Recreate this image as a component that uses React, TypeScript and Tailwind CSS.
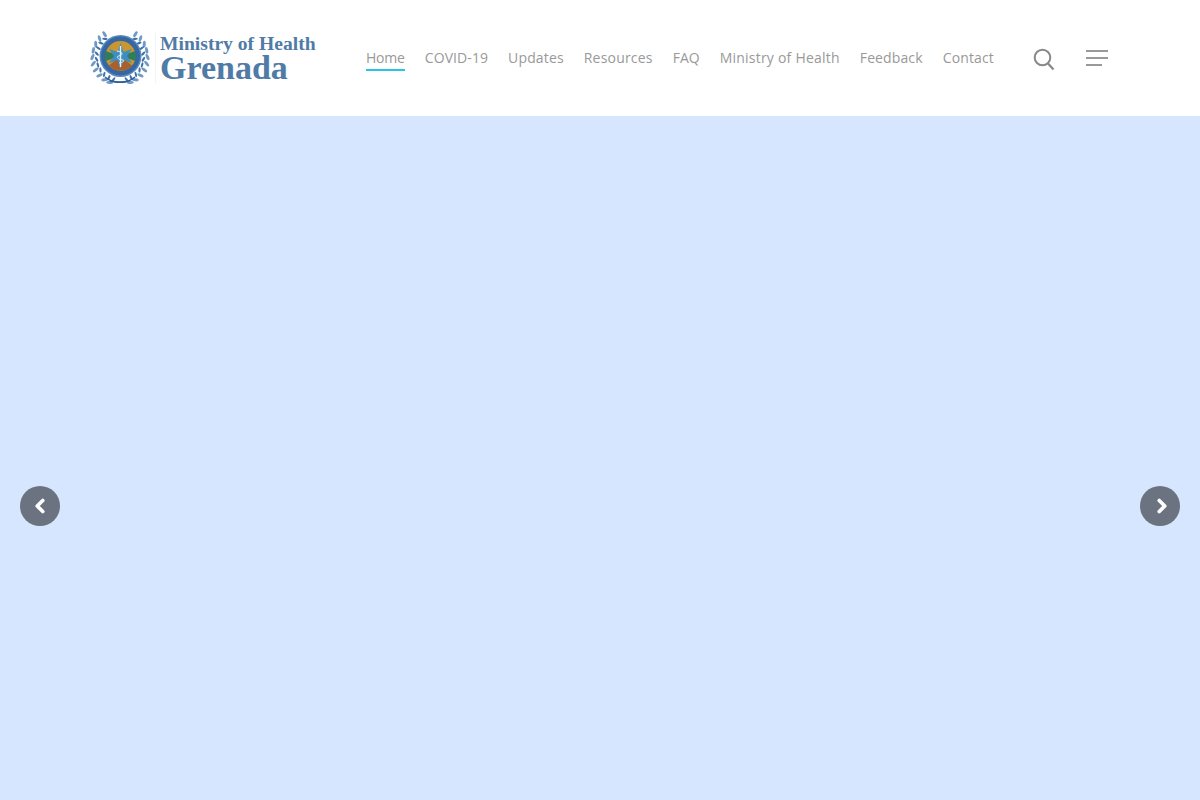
import { ChevronLeft, ChevronRight } from "lucide-react";

const navItems = [
  { label: "Home", spacing: "tracking-[-0.2px]" },
  { label: "COVID-19", spacing: "tracking-[0.08px]" },
  { label: "Updates", spacing: "tracking-[0.15px]" },
  { label: "Resources", spacing: "tracking-[0.2px]" },
  { label: "FAQ", spacing: "tracking-normal" },
  { label: "Ministry of Health", spacing: "tracking-[0.22px]" },
  { label: "Feedback", spacing: "tracking-[0.12px]" },
  { label: "Contact", spacing: "tracking-[0.15px]" },
];

// angle runs from the top of the wreath down to the stems
const angles = [-56, -42, -28, -14, 0, 14, 28, 42, 56, 68];

function Wreath({ flip }: { flip?: boolean }) {
  return (
    <g transform={flip ? "translate(60 0) scale(-1 1)" : undefined}>
      {angles.map((a) => {
        const rad = (a * Math.PI) / 180;
        const x = 30 - 27.5 * Math.cos(rad);
        const y = 26 + 27.5 * Math.sin(rad);
        const x2 = 30 - 23.5 * Math.cos(rad + 0.1);
        const y2 = 26 + 23.5 * Math.sin(rad + 0.1);
        return (
          <g key={a}>
            <ellipse cx={x} cy={y} rx="1.5" ry="3.4" fill="#6f9ac6" transform={`rotate(${a + 25} ${x} ${y})`} />
            <ellipse cx={x2} cy={y2} rx="1.1" ry="2.8" fill="#3f70a8" transform={`rotate(${a - 30} ${x2} ${y2})`} />
          </g>
        );
      })}
      <path d="M15 46 C22 52 29 52 40 50" stroke="#2f5f96" strokeWidth="1.5" fill="none" />
    </g>
  );
}

function Logo() {
  return (
    <div className="flex items-center w-[226px] h-[56px]">
      <svg width="60" height="54" viewBox="0 0 60 54" className="shrink-0">
        <Wreath />
        <Wreath flip />
        <circle cx="30.5" cy="25" r="21" fill="#5a8abf" />
        <circle cx="30.5" cy="25" r="19.5" fill="#3567a2" />
        <circle cx="30.5" cy="25" r="15" fill="#c9962f" />
        <path d="M30.5 25 L15.5 20 A15 15 0 0 0 15.5 30 Z M30.5 25 L45.5 20 A15 15 0 0 1 45.5 30 Z" fill="#2f7d5c" />
        <path d="M30.5 25 L19 34.5 A15 15 0 0 0 42 34.5 Z" fill="#a9602f" />
        <path d="M30.5 12 L33.5 21 L42 18 L37 25 L42 32 L33.5 29 L30.5 38 L27.5 29 L19 32 L24 25 L19 18 L27.5 21 Z" fill="#3c8fc4" />
        <path d="M30.5 15 V36" stroke="#e8f0f6" strokeWidth="1.4" />
        <path d="M27 20 C33.5 21 33.5 24 28.5 25 C25.5 26 28.5 29 33.5 29 C34.5 31 30.5 32 29 32" stroke="#e8f0f6" strokeWidth="1" fill="none" />
      </svg>
      <div className="ml-[5px] h-[50px] w-px bg-gray-100 shrink-0" />
      <div className="ml-1 flex flex-col font-['Liberation_Serif',serif] font-bold text-[#4f7ba6] whitespace-nowrap">
        <span className="text-[19.6px] leading-[20px]">Ministry of Health</span>
        <span className="text-[34px] leading-[28px]">Grenada</span>
      </div>
    </div>
  );
}

export default function App() {
  return (
    <div className="h-[800px] flex flex-col overflow-hidden bg-white font-['Open_Sans',sans-serif]">
      <header className="h-[116px] shrink-0 flex items-center pl-[90px]">
        <Logo />
        <nav className="ml-[50px] flex gap-5">
          {navItems.map((item) => (
            <a
              key={item.label}
              href="#"
              className={`text-[14px] leading-[22px] text-[#999] border-b-2 pt-[1px] ${item.spacing} ${item.label === "Home" ? "border-[#27c4e8]" : "border-transparent"}`}
            >
              {item.label}
            </a>
          ))}
        </nav>
        <svg width="22" height="23" viewBox="0 0 22 23" className="ml-[39px] mt-[3px] text-[#888]" fill="none" stroke="currentColor">
          <circle cx="9.5" cy="9.5" r="7.8" strokeWidth="2" />
          <path d="M15 15.5 L20.5 21.5" strokeWidth="2.2" />
        </svg>
        <div className="ml-[31px] flex flex-col gap-[5px] w-[22px]">
          <span className="h-0.5 w-[22px] bg-[#999]" />
          <span className="h-0.5 w-[22px] bg-[#999]" />
          <span className="h-0.5 w-4 bg-[#999]" />
        </div>
      </header>
      <main className="relative flex-1 bg-[#d6e6ff]">
        <button className="absolute left-5 top-[370px] w-10 h-10 rounded-full bg-[#6b7280] flex items-center justify-center text-white">
          <ChevronLeft size={22} strokeWidth={4} className="mr-[1px]" />
        </button>
        <button className="absolute right-5 top-[370px] w-10 h-10 rounded-full bg-[#6b7280] flex items-center justify-center text-white">
          <ChevronRight size={22} strokeWidth={4} className="ml-[3px]" />
        </button>
      </main>
    </div>
  );
}
